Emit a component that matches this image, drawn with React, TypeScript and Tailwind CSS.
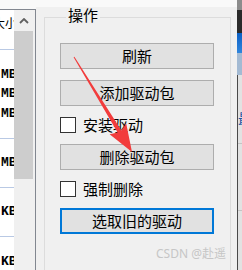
import React from "react";

function ListBox() {
  const mono = "font-['Liberation_Mono',monospace] font-bold text-[13px] leading-[19.5px] text-black pl-[1px] whitespace-nowrap";
  return (
    <div className="w-[36px] shrink-0 pt-[2px] bg-[#f9f9f9] flex flex-col">
      <div className="flex-1 flex border-t border-r border-[#828790] bg-white">
        <div className="w-[14px] overflow-hidden flex flex-col bg-white">
          <div className="h-[40px] shrink-0 border-b border-[#b9c9e4] pt-[5px] text-[12px] leading-[16px] whitespace-nowrap">
            <span className="ml-[-7px]">大小</span>
          </div>
          <div className={"h-[89px] shrink-0 border-b border-[#b9c9e4] flex flex-col justify-center " + mono}>
            <div>MB</div>
            <div>MB</div>
            <div>MB</div>
          </div>
          <div className={"h-[49px] shrink-0 border-b border-[#b9c9e4] flex flex-col justify-center " + mono}>
            <div>MB</div>
          </div>
          <div className={"h-[49px] shrink-0 border-b border-[#b9c9e4] flex flex-col justify-center " + mono}>
            <div>KB</div>
          </div>
          <div className={"h-[49px] shrink-0 flex flex-col justify-center " + mono}>
            <div>KB</div>
          </div>
        </div>
        <div className="w-[21px] shrink-0 bg-[#f0f0f0] flex flex-col">
          <div className="h-[21px] shrink-0 flex items-center justify-center pr-[2px]">
            <svg width="10" height="6" viewBox="0 0 10 6">
              <path d="M1 5 L5 1 L9 5" fill="none" stroke="#606060" strokeWidth="1.8" />
            </svg>
          </div>
          <div className="h-[148px] shrink-0 w-[19px] bg-[#cdcdcd]" />
          <div className="flex-1" />
        </div>
      </div>
    </div>
  );
}

function Btn({ label, focused }: { label: string; focused?: boolean }) {
  return (
    <div
      className={
        "w-[154px] h-[26px] shrink-0 bg-[#e1e1e1] flex items-center justify-center text-[15px] leading-[26px] text-black " +
        (focused ? "border-2 border-[#0078d7]" : "border border-[#adadad]")
      }
    >
      {label}
    </div>
  );
}

function Check({ label }: { label: string }) {
  return (
    <div className="h-[16px] shrink-0 flex items-center gap-[7px]">
      <div className="w-[16px] h-[16px] bg-white border border-[#333333] shrink-0" />
      <span className="text-[15px] leading-[16px] text-black whitespace-nowrap">{label}</span>
    </div>
  );
}

function Panel() {
  return (
    <div className="flex-1 pl-[8px] pr-[6px]">
      <fieldset className="border border-[#dcdcdc] pl-[15px] pt-[16px] pb-[80px]">
        <legend className="ml-[6px] px-[2px] text-[15px] leading-[16px] pb-[4px] text-black">操作</legend>
        <div className="flex flex-col gap-[11px]">
          <Btn label="刷新" />
          <Btn label="添加驱动包" />
          <Check label="安装驱动" />
          <Btn label="删除驱动包" />
          <Check label="强制删除" />
          <Btn label="选取旧的驱动" focused />
        </div>
      </fieldset>
    </div>
  );
}

function RightStrip() {
  return (
    <div className="w-[5px] shrink-0 flex flex-col overflow-hidden">
      <div className="h-[10px] shrink-0 bg-[#8c8c8c]" />
      <div className="h-[23px] shrink-0 bg-[#2a2a2a]" />
      <div className="h-[20px] shrink-0 bg-gradient-to-b from-[#0a5fc4] to-[#2f86dd]" />
      <div className="h-[22px] shrink-0 bg-[#a3bad3]" />
      <div className="flex-1 border-l border-[#4a4a4a] bg-[#e2e2e2] flex flex-col">
        <div className="h-[35px] shrink-0" />
        <div className="h-[16px] shrink-0 text-[14px] leading-[16px] text-[#2455a4] overflow-hidden whitespace-nowrap">最</div>
        <div className="h-[17px] shrink-0" />
        <div className="h-px shrink-0 bg-[#c4c4c4]" />
        <div className="h-[66px] shrink-0" />
        <div className="h-px shrink-0 bg-[#c4c4c4]" />
      </div>
    </div>
  );
}

function Arrow() {
  return (
    <svg className="absolute left-0 top-0 pointer-events-none" width="242" height="270" viewBox="0 0 242 270">
      <polygon
        points="74.4,56.8 121.4,130.4 126.2,123.6 132,152 109.6,134.2 117.6,132.6 73.6,57.2"
        fill="#f23c3c"
      />
    </svg>
  );
}

export default function App() {
  return (
    <div className="relative w-[242px] h-[270px] overflow-hidden bg-[#f0f0f0] flex font-['Noto_Sans_CJK_SC',sans-serif]">
      <div className="w-[237px] shrink-0 flex flex-col">
        <div className="h-[7px] shrink-0 bg-[#f9f9f9]" />
        <div className="flex flex-1 min-h-0">
          <ListBox />
          <Panel />
        </div>
      </div>
      <RightStrip />
      <Arrow />
      <div className="absolute right-[16px] top-[246px] text-[12px] leading-[16px] text-[#c6c6c6] whitespace-nowrap font-['Noto_Sans','Noto_Sans_CJK_SC',sans-serif]">
        CSDN @赴遥
      </div>
    </div>
  );
}
